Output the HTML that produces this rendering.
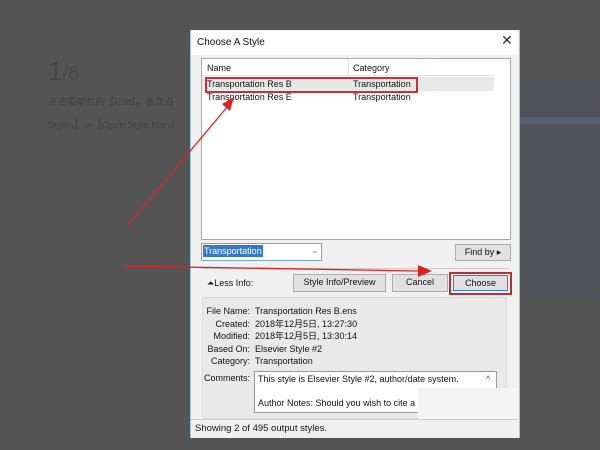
<!DOCTYPE html>
<html><head><style>
body{margin:0;width:600px;height:450px;background:#545454;position:relative;overflow:hidden;font-family:"Liberation Sans","Noto Sans CJK SC",sans-serif;font-size:9px;color:#111;line-height:11px}
.a{position:absolute}
.bg{color:#444}
.btn{position:absolute;background:#e1e1e1;border:1px solid #adadad;text-align:center;line-height:15px;font-size:9px}
.lab{position:absolute;width:58px;text-align:right;left:192px;line-height:11px}
.val{position:absolute;left:255px;line-height:11px}
</style></head><body>
<div class="a" style="left:48px;top:56px;font-size:26px;line-height:30px;color:#3e4a3e">1<span style="font-size:20px;color:#484848">/6</span></div>
<div class="a bg" style="left:48px;top:97px;font-size:9.5px">点击菜单栏的【Edit】，依次点</div>
<div class="a bg" style="left:48px;top:120px;font-size:9.5px">Styles】-&gt;【Open Style Mana</div>
<div class="a" style="left:519px;top:80px;width:81px;height:220px;background:#505257"></div>
<div class="a" style="left:519px;top:117px;width:81px;height:7px;background:#566272"></div>
<div class="a" style="left:190px;top:30px;width:328px;height:408px;background:#f0f0f0;border-left:1px solid #9fc8e6;border-right:1px solid #9fc8e6"></div>
<div class="a" style="left:191px;top:31px;width:327px;height:24px;background:#fff"></div>
<div class="a" style="left:197px;top:37px;font-size:10px">Choose A Style</div>
<div class="a" style="left:501px;top:35px;font-size:14px;color:#333">✕</div>
<div class="a" style="left:201px;top:58px;width:308px;height:180px;background:#fff;border:1px solid #aaa"></div>
<div class="a" style="left:202px;top:59px;width:292px;height:16px;border-bottom:1px solid #e2e2e2"></div>
<div class="a" style="left:348px;top:59px;width:1px;height:16px;background:#e2e2e2"></div>
<div class="a" style="left:207px;top:63px">Name</div>
<div class="a" style="left:353px;top:63px">Category</div>
<div class="a" style="left:202px;top:77px;width:292px;height:14px;background:#e8e8e8"></div>
<div class="a" style="left:205px;top:77px;width:209px;height:12px;border:2px solid #c8303a"></div>
<div class="a" style="left:207px;top:79px">Transportation Res B</div>
<div class="a" style="left:353px;top:79px">Transportation</div>
<div class="a" style="left:207px;top:92px">Transportation Res E</div>
<div class="a" style="left:353px;top:92px">Transportation</div>
<div class="a" style="left:201px;top:243px;width:119px;height:16px;background:#fff;border:1px solid #7aa7d0"></div>
<div class="a" style="left:203px;top:245px;height:12px;line-height:12px;background:#3478c6;color:#fff;padding:0 1px">Transportation</div>
<div class="a" style="left:311px;top:245px;color:#888">⌄</div>
<div class="btn" style="left:455px;top:244px;width:54px;height:15px">Find by ▸</div>
<div class="a" style="left:201px;top:268px;width:308px;height:1px;background:#ccc"></div>
<div class="a" style="left:207px;top:278px">⏶Less Info:</div>
<div class="btn" style="left:293px;top:274px;width:91px;height:16px">Style Info/Preview</div>
<div class="btn" style="left:392px;top:274px;width:54px;height:16px">Cancel</div>
<div class="a" style="left:449px;top:272px;width:59px;height:19px;border:2px solid #b82f3c"></div>
<div class="btn" style="left:453px;top:275px;width:53px;height:14px;border-color:#3c7fc0;line-height:14px">Choose</div>
<div class="a" style="left:202px;top:297px;width:303px;height:120px;background:#e9e9e9;border:1px solid #ddd"></div>
<div class="lab" style="top:306px">File Name:</div><div class="val" style="top:306px">Transportation Res B.ens</div>
<div class="lab" style="top:319px">Created:</div><div class="val" style="top:319px">2018年12月5日, 13:27:30</div>
<div class="lab" style="top:331px">Modified:</div><div class="val" style="top:331px">2018年12月5日, 13:30:14</div>
<div class="lab" style="top:344px">Based On:</div><div class="val" style="top:344px">Elsevier Style #2</div>
<div class="lab" style="top:356px">Category:</div><div class="val" style="top:356px">Transportation</div>
<div class="lab" style="top:373px">Comments:</div>
<div class="a" style="left:254px;top:371px;width:241px;height:40px;background:#fff;border:1px solid #999;overflow:hidden"></div>
<div class="a" style="left:258px;top:374px;font-size:9px">This style is Elsevier Style #2, author/date system.</div>
<div class="a" style="left:258px;top:398px;font-size:9px">Author Notes: Should you wish to cite a s</div>
<div class="a" style="left:486px;top:374px;color:#555">^</div>
<div class="a" style="left:418px;top:388px;width:100px;height:32px;background:#f4f4f4"></div>
<div class="a" style="left:191px;top:419px;width:327px;height:1px;background:#ccc"></div>
<div class="a" style="left:195px;top:423px;font-size:9.5px">Showing 2 of 495 output styles.</div>
<svg class="a" style="left:0;top:0" width="600" height="450">
<line x1="128" y1="225" x2="228" y2="106" stroke="#e02020" stroke-width="1.3"/>
<polygon points="234,97 222,104 230,111" fill="#e02020"/>
<line x1="124" y1="266" x2="418" y2="271" stroke="#e02020" stroke-width="1.3"/>
<polygon points="432,271 418,265 418,277" fill="#e02020"/>
</svg>
</body></html>
